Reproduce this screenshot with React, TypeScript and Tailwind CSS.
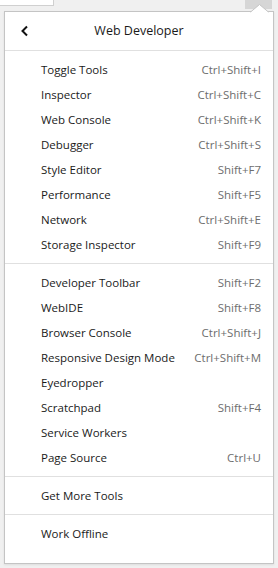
const sections = [
  [
    { label: "Toggle Tools", key: "Ctrl+Shift+I" },
    { label: "Inspector", key: "Ctrl+Shift+C" },
    { label: "Web Console", key: "Ctrl+Shift+K" },
    { label: "Debugger", key: "Ctrl+Shift+S" },
    { label: "Style Editor", key: "Shift+F7" },
    { label: "Performance", key: "Shift+F5" },
    { label: "Network", key: "Ctrl+Shift+E" },
    { label: "Storage Inspector", key: "Shift+F9" },
  ],
  [
    { label: "Developer Toolbar", key: "Shift+F2" },
    { label: "WebIDE", key: "Shift+F8" },
    { label: "Browser Console", key: "Ctrl+Shift+J" },
    { label: "Responsive Design Mode", key: "Ctrl+Shift+M" },
    { label: "Eyedropper", key: "" },
    { label: "Scratchpad", key: "Shift+F4" },
    { label: "Service Workers", key: "" },
    { label: "Page Source", key: "Ctrl+U" },
  ],
  [{ label: "Get More Tools", key: "" }],
  [{ label: "Work Offline", key: "" }],
];

const App = () => {
  return (
    <div
      className="relative h-[568px] w-[278px] overflow-hidden bg-[#f0f0f0] text-[11.5px]"
      style={{ fontFamily: '"Open Sans", "Noto Sans", sans-serif' }}
    >
      {/* toolbar strip */}
      <div className="flex h-[11px] items-start justify-between">
        <div className="h-[6px] w-[54px] border-b border-r border-[#d0d0d0] bg-white" />
        <div className="mr-[6px] h-[9px] w-[27px] bg-[#d6d6d6]" />
      </div>

      {/* panel */}
      <div className="relative mx-[4px] h-[553px] border border-[#c4c4c4] bg-white shadow-[0_1px_2px_rgba(0,0,0,0.08)]">
        {/* arrow */}
        <svg
          className="absolute -top-[8px] left-[245px]"
          width="20"
          height="9"
          viewBox="0 0 20 9"
        >
          <path d="M0 8.5 L9.5 0.5 L19 8.5" fill="white" stroke="#c4c4c4" strokeWidth="1" />
          <rect x="0" y="8.5" width="20" height="1" fill="white" />
        </svg>

        {/* header */}
        <div className="relative flex h-[39px] items-center justify-center border-b border-[#e0e0e0]">
          <button className="absolute left-[15px] top-[13px]">
            <svg width="10" height="12" viewBox="0 0 10 12">
              <path d="M7 1.5 L2.5 6 L7 10.5" fill="none" stroke="#111" strokeWidth="2" />
            </svg>
          </button>
          <span className="text-[12.5px] text-[#1a1a1a]">Web Developer</span>
        </div>

        {sections.map((items, i) => (
          <div
            key={i}
            className={`py-[6px] ${i < sections.length - 1 ? "border-b border-[#e0e0e0]" : ""}`}
          >
            {items.map((it) => (
              <div
                key={it.label}
                className="flex h-[25px] items-center justify-between pl-[36px] pr-[12px]"
              >
                <span className="text-[#1a1a1a]">{it.label}</span>
                <span className="text-[#6d6d6d]">{it.key}</span>
              </div>
            ))}
          </div>
        ))}
      </div>
    </div>
  );
};

export default App;
